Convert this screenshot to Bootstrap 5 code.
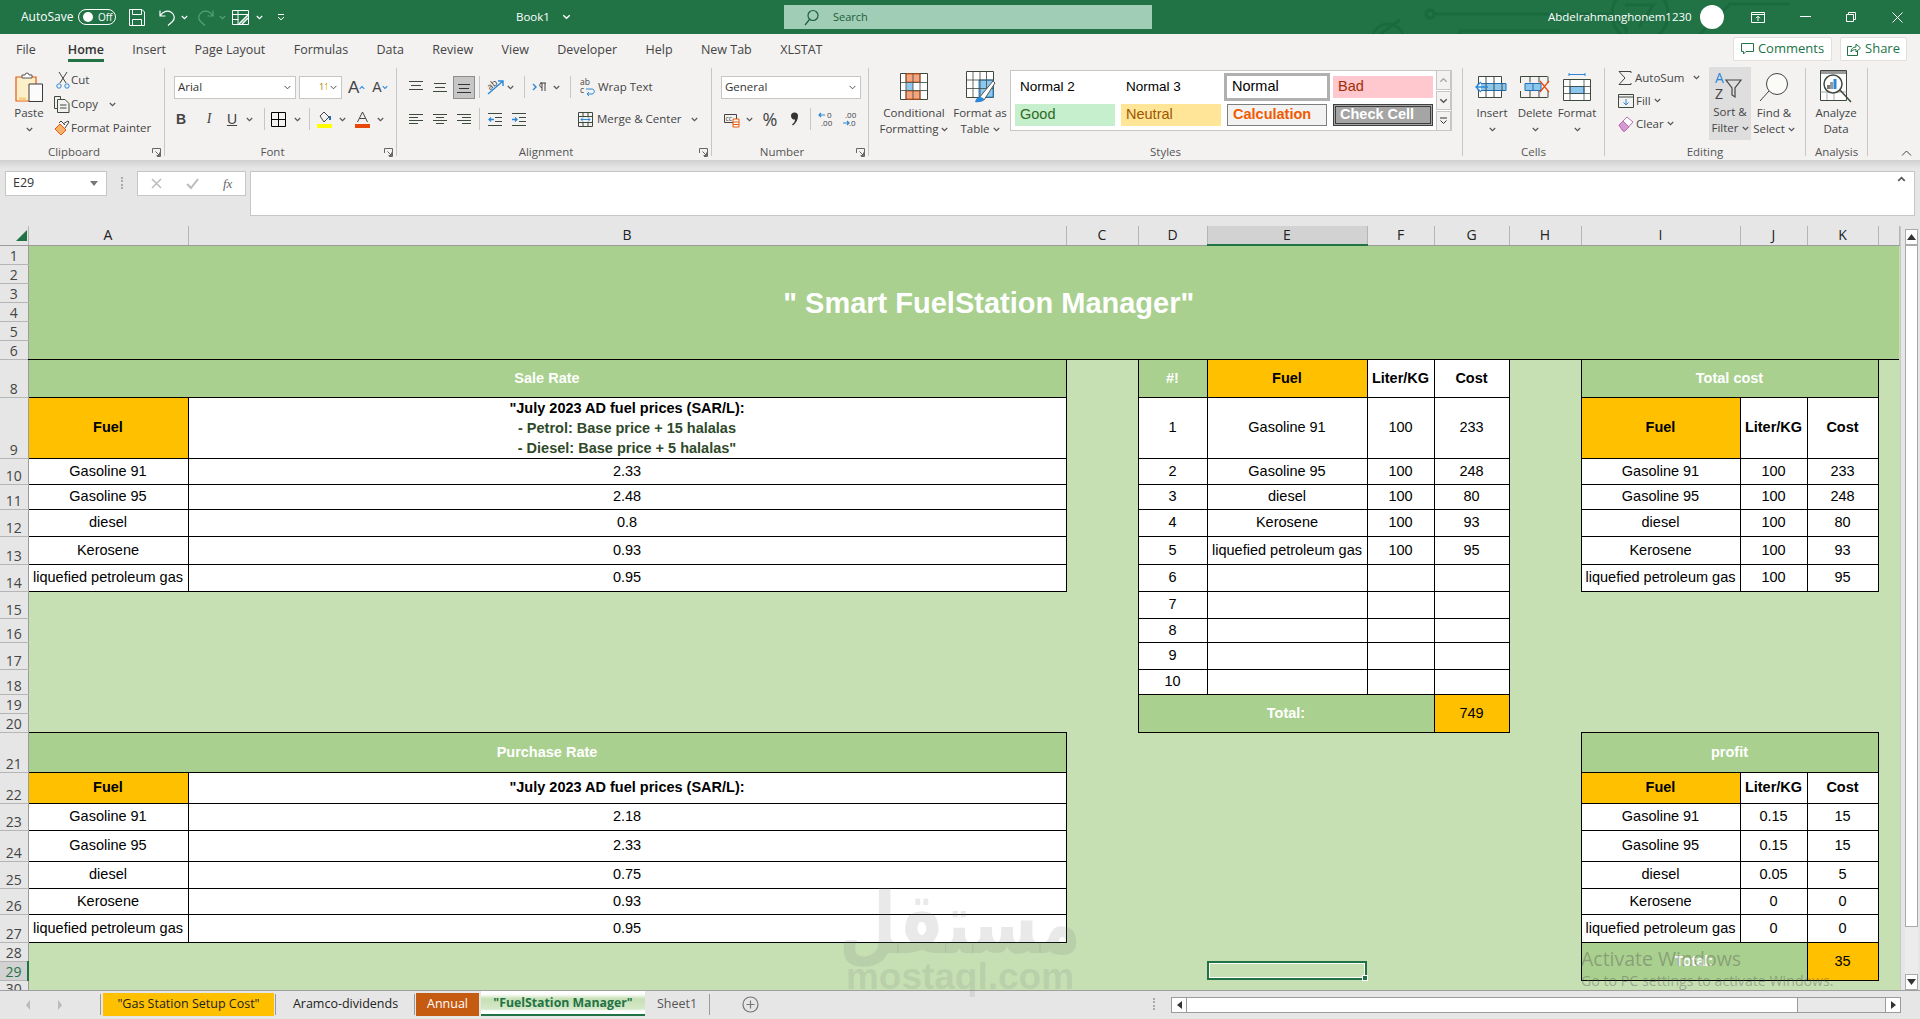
<!DOCTYPE html>
<html lang="en">
<head>
<meta charset="utf-8">
<title>Book1 - Excel</title>
<link href="https://cdn.jsdelivr.net/npm/bootstrap@5.3.0/dist/css/bootstrap.min.css" rel="stylesheet">
<style>
html,body{height:1019px;overflow:hidden;background:#e6e6e6}
body{font-family:"Open Sans","Noto Sans",sans-serif;font-size:11.5px;color:#444;position:relative;width:1920px}
svg{flex:none;display:block;overflow:visible}
.ml1{margin-left:1px}.ml2{margin-left:2px}.ml3{margin-left:3px}.ml4{margin-left:4px}.ml5{margin-left:5px}.ml6{margin-left:6px}.ml7{margin-left:7px}.ml8{margin-left:8px}.ml9{margin-left:9px}.ml10{margin-left:10px}.ml11{margin-left:11px}.ml12{margin-left:12px}.ml13{margin-left:13px}.ml14{margin-left:14px}.ml16{margin-left:16px}.ml20{margin-left:20px}.ml27{margin-left:27px}.ml35{margin-left:35px}.ml36{margin-left:36px}.ml52{margin-left:52px}
/* title bar */
.xl-title{height:34px;background:#217346;color:#fff;position:relative;overflow:hidden}
.xl-title>*{position:relative}
.xl-title .xl-circuit{position:absolute;left:1280px;top:0}
.xl-auto{margin-left:21px;font-size:12px;width:50px;white-space:nowrap}
.xl-toggle{margin-left:7px;width:38px;height:16px;border:1px solid #fff;border-radius:8px;font-size:10px;padding-left:19px;line-height:14px;flex:none}
.xl-toggle::before{content:"";position:absolute;width:10px;height:10px;border-radius:50%;background:#fff;margin:2px 0 0 -15px}
.xl-book{margin-left:231px;width:43px;font-size:11.5px}
.xl-search{margin-left:213px;width:368px;height:24px;background:#a0cdb5;color:#1d5d3b;padding-left:20px;font-size:11px;flex:none}
.xl-user{margin-left:396px;width:140px;font-size:11.5px;white-space:nowrap;flex:none}
.xl-avatar{width:24px;height:24px;border-radius:50%;background:#fff;margin-left:12px;flex:none}
/* ribbon */
.xl-ribbon{height:126px;background:#f3f2f1}
.xl-tabs{height:32px;position:relative}
.xl-tabs .nav-link{padding:0;margin-right:28.4px;color:#444;font-size:12.5px;line-height:31px;height:28px;border-bottom:3px solid transparent;white-space:nowrap}
.xl-tabs .nav-item:first-child .nav-link{margin-right:32px}
.xl-tabs .nav-link.active{color:#333;font-weight:600;border-bottom-color:#217346}
.xl-comment{margin-top:3px;height:24px;background:#fff;border:1px solid #e1dfdd;border-radius:2px;color:#217346;font-size:13px;padding:0;font-weight:500}
.xl-c1{width:99px;margin-left:auto}.xl-c2{width:67px;margin-left:8px;margin-right:13px}
.xl-groups{height:94px}
.xl-grp{height:88px;margin-top:2px;border-right:1px solid #c8c6c4;flex:none;position:relative}
.xl-lab{position:absolute;left:0;right:0;top:76px;height:16px;line-height:16px;text-align:center;color:#555;font-size:11.5px}
.xl-lab.lch{right:16px}
.xl-launch{position:absolute;right:3px;top:80px}
.g1{width:165px}.g2{width:232px}.g3{width:315px}.g4{width:157px}.g5{width:594px}.g6{width:142px}.g7{width:201px}.g8{width:62px}
.xl-rows{padding-top:8px}
.xl-r{height:22px;display:flex;align-items:center;white-space:nowrap}
.xl-r+.xl-r{margin-top:10px}
.xl-sep{width:1px;height:22px;background:#c8c6c4;flex:none}
.xl-sel{height:23px;border:1px solid #c8c6c4;border-radius:0;padding:0 14px 0 3px;font-size:11.5px;line-height:20px;background-size:9px 7px;background-position:right 3px center;color:#333;min-height:0;flex:none;font-family:"Open Sans",sans-serif}
.xl-sel:focus{box-shadow:none}
.xf{width:122px}.xs{width:43px;padding-left:19px;font-size:9px;color:#a08000}.xn{width:140px}
.xl-b{font:bold 14px "Liberation Sans",sans-serif;width:12px;text-align:center;color:#444}
.xl-i{font:italic 14px "Liberation Serif",serif;width:12px;text-align:center;color:#444}
.xl-u{font:14px "Liberation Sans",sans-serif;width:12px;text-align:center;text-decoration:underline;color:#444}
.xl-ga{font:17px "Liberation Sans",sans-serif;color:#444;line-height:1}
.xl-gb{font:14px "Liberation Sans",sans-serif;color:#444;line-height:1}
.xl-pct{font:18px "Open Sans",sans-serif;color:#444;width:16px;text-align:center;line-height:1}
.xl-box{width:22px;height:23px;background:#c6c6c6;border:1px solid #8e8e8e;display:flex;align-items:center;justify-content:center;flex:none}
.xl-big{display:flex;flex-direction:column;align-items:center;flex:none;text-align:center;line-height:16px;white-space:nowrap}
.xl-big .xl-ic{height:37px;display:flex;align-items:center;justify-content:center}
.xl-big svg.cv{display:inline-block;vertical-align:1px}
.xl-big .xl-cv{display:flex;justify-content:center;height:16px;align-items:center}
.bw42{width:42px}.bw74{width:74px}.bw58{width:58px}.bw52{width:52px}
.xl-hot{background:#dedede;height:73px;margin-top:-1px;align-self:flex-start}
.xl-sm{height:24px;display:flex;align-items:center;white-space:nowrap}
.xl-e{height:23px;display:flex;align-items:center;white-space:nowrap}
.xl-edcol{width:91px;flex:none;margin-top:-2px}
.xl-gal{width:442px;height:61px;margin:2px 0 0 1px;background:#fff;border:1px solid #c8c6c4;flex:none;position:relative}
.xl-galgrid{display:grid;grid-template-columns:repeat(4,100px);grid-auto-rows:22px;gap:6px;padding:5px 0 0 4px;font:14.5px/20px "Liberation Sans",sans-serif;color:#000}
.xl-galgrid>div{padding-left:5px;white-space:nowrap;overflow:visible}
.st-n{font-size:13.5px;padding-left:6px;line-height:22px}
.st-normal{background:#fff;outline:3px solid #b0b0b0;padding-left:3px}
.st-bad{background:#ffc7ce;color:#9c3006}
.st-good{background:#c6efce;color:#2f6a1f}
.st-neu{background:#ffe598;color:#9c5700}
.st-calc{background:#f2f2f2;color:#f15a00;font-weight:700;border:1px solid #7f7f7f;line-height:18px}
.st-chk{background:#a5a5a5;color:#fff;font-weight:700;border:3px double #3f3f3f;line-height:15px;padding-left:4px!important}
.xl-galbtn{position:absolute;right:0;top:-1px;bottom:-1px;width:15px;display:flex;flex-direction:column;gap:1px}
.xl-galbtn div{flex:1;border:1px solid #c8c6c4;background:#f3f2f1;display:flex;align-items:center;justify-content:center}
.xl-collapse{margin:84px 0 0 33px;align-self:flex-start}
/* formula bar */
.xl-fbar{height:66px;padding-top:11px;background:linear-gradient(#cfcfcf,#e6e6e6 8px)}
.xl-name{margin-left:5px;width:102px;height:25px;background:#fff;border:1px solid #c8c6c4;padding-left:7px;padding-right:7px;color:#333;font-size:12.5px}
.xl-dots{width:2px;height:12px;margin:6px 0 0 14px;border-left:2px dotted #aaa}
.xl-fx{margin-left:14px;width:109px;height:25px;background:#fff;border:1px solid #c8c6c4;padding-left:13px;gap:24px}
.xl-fxt{font:italic 13px "Liberation Serif",serif;color:#666}
.xl-input{margin-left:4px;width:1665px;height:45px;border:1px solid #c8c6c4;background:#fff;padding:4px 8px;display:flex;justify-content:flex-end}
/* sheet */
.xl-sheet{height:764px;overflow:hidden}
.xl-grid{table-layout:fixed;width:1899px;border-collapse:collapse;font:14.5px/1.15 "Liberation Sans",sans-serif;color:#000;flex:none;background:#c6e0b4}
.c0{width:28px}.ca{width:160px}.cb{width:878px}.cc{width:72px}.cdd{width:69px}.ce{width:160px}.cf{width:67px}.cgg{width:75px}.ch{width:72px}.ci{width:159px}.cj{width:67px}.ck{width:71px}.cl{width:21px}
.xl-grid td{padding:0;text-align:center;vertical-align:middle;background:#c6e0b4;overflow:hidden;white-space:nowrap}
.xl-grid thead th{height:19px;background:#e6e6e6;font:400 14px/18px "Open Sans",sans-serif;color:#222;text-align:center;border-right:1px solid #b5b5b5;border-bottom:1px solid #9b9b9b;padding:0}
.xl-grid thead th.xl-hc{background:#d2d2d2;border-bottom:2px solid #217346}
.xl-grid tbody th{background:#e6e6e6;font:400 14px/16px "Open Sans",sans-serif;color:#444;text-align:center;vertical-align:bottom;padding:0;border-bottom:1px solid #b5b5b5;border-right:1px solid #9b9b9b}
.xl-grid tbody th.xl-hr{background:#d2d2d2;border-right:2px solid #217346;color:#217346}
.xl-grid tbody th div{height:10px;overflow:hidden}
.rh19{height:19px}.rh24{height:24px}.rh25{height:25px}.rh26{height:26px}.rh27{height:27px}.rh28{height:28px}.rh31{height:31px}.rh38{height:38px}.rh40{height:40px}.rh60{height:60px}.rh11{height:11px}
.xl-grid td.cap{background:#a9d08e;color:#fff;font-weight:700;font-size:29px;border-bottom:1px solid #000;padding-left:50px;padding-top:2px}
.xl-grid td.cw{background:#fff;border:1px solid #000}
.xl-grid td.cwb{background:#fff;border:1px solid #000;font-weight:700}
.xl-grid td.cg{background:#ffc000;border:1px solid #000;font-weight:700}
.xl-grid td.cgn{background:#ffc000;border:1px solid #000}
.xl-grid td.cd{background:#a9d08e;border:1px solid #000;color:#fff;font-weight:700}
.xl-multi{line-height:20px}
.xl-olive{color:#2f4a2a}
.xl-grid td.xl-cell{position:relative;box-shadow:inset 0 0 0 2px #217346,inset 0 0 0 3px #fff;overflow:visible}
.xl-handle{position:absolute;right:-1px;bottom:-1px;width:6px;height:6px;background:#217346;border:1px solid #fff;z-index:2}
.xl-vs{width:21px;background:#e6e6e6;padding:3px 3px 0 4px;flex:none;display:flex;flex-direction:column;border-left:1px solid #c8c8c8}
.xl-vs .xl-up{height:16px;background:#fff;border:1px solid #aaa;display:flex;align-items:center;justify-content:center;flex:none}
.xl-vs .xl-th{height:682px;background:#fff;border:1px solid #aaa;flex:none}
.xl-vs .xl-tr{flex:1;background:#ececec}
/* sheet tabs */
.xl-bar{height:29px;background:#e6e6e6;border-top:1px solid #a0a0a0;position:relative}
.xl-arrows{margin:8px 0 0 26px}
.xl-tab{height:23px;margin-top:2px;display:flex;align-items:center;justify-content:center;font-size:12.5px;color:#222;flex:none;white-space:nowrap}
.t1{width:171px;background:#ffc000;margin-left:2px}
.t2{width:137px;margin-left:1px}
.t3{width:63px;background:#c55a11;color:#fff;margin-left:1px}
.t4{width:164px;margin-left:2px;background:linear-gradient(#fff 3px,#c6e0b4 8px,#d5e8c9 18px,#fff 20px);border-bottom:2px solid #217346;color:#217346;font-weight:700;font-size:12.3px;height:25px;margin-top:0;padding-top:2px}
.t5{width:64px;color:#555}
.tsep{width:1px;height:21px;background:#9b9b9b;margin-top:3px;flex:none}
.ts0{margin-left:38px}
.xl-plus{margin-left:32px;margin-top:5px}
.xl-hdots{margin:7px 0 0 394px;width:2px;height:12px;border-left:2px dotted #aaa}
.xl-hs{margin:6px 0 0 16px;width:730px;height:16px;display:flex;background:#e9e9e9;border:1px solid #9b9b9b;flex:none}
.xl-hs .ab{width:15px;background:#fff;display:flex;align-items:center;justify-content:center;flex:none}
.xl-hs .hb1{border-right:1px solid #9b9b9b}.xl-hs .hb2{border-left:1px solid #9b9b9b;margin-left:auto}
.xl-hs .ht{width:611px;background:#fff;border-right:1px solid #9b9b9b;flex:none}
/* overlays */
.xl-wm{position:absolute;text-align:center;color:rgba(125,125,125,.17);pointer-events:none;white-space:nowrap}
.wm1{left:790px;width:340px;top:878px;font:bold 86px/90px "DejaVu Sans",sans-serif;transform:scaleX(.77)}
.wm2{left:845px;width:230px;top:957px;font:bold 37px/40px "Liberation Sans",sans-serif}
.xl-act{position:absolute;left:1581px;color:rgba(90,90,90,.42);white-space:nowrap;pointer-events:none;font-family:"Open Sans",sans-serif}
.ac1{top:945px;font-size:19.5px;line-height:28px}
.ac2{top:971px;font-size:14.2px;line-height:20px}
</style>
</head>
<body>
<svg width="0" height="0" class="d-none">
<symbol id="cv" viewBox="0 0 7 5"><path d="M.8 1l2.700 2.600L6.200 1" fill="none" stroke="#555" stroke-width="1.200"/></symbol>
<symbol id="cw" viewBox="0 0 7 5"><path d="M.8 1l2.700 2.600L6.200 1" fill="none" stroke="#fff" stroke-width="1.200"/></symbol>
<symbol id="dl" viewBox="0 0 9 9"><path d="M.5 5V.5H8.500V8.500H5M3.500 3.500l4 4M7.500 4.500v3h-3" fill="none" stroke="#666"/></symbol>
</svg>

<!-- TITLE BAR -->
<header class="xl-title d-flex align-items-center">
  <svg class="xl-circuit" width="520" height="34" viewBox="0 0 520 34" fill="none" stroke="#1a6a3d" stroke-width="3"><circle cx="150" cy="14" r="4"/><path d="M154 14H330l16 14v6M100 34l20-14M180 34l0-3h100"/><circle cx="108" cy="40" r="16"/><circle cx="360" cy="14" r="28"/><path d="M345 5h28l-14 22"/><path d="M420 34L450 4h60"/></svg>
  <div class="xl-auto">AutoSave</div>
  <div class="xl-toggle">Off</div>
  <svg class="ml13" width="16" height="17" viewBox="0 0 16 17" fill="none" stroke="#fff"><path d="M.5.500h12.500l2.500 2.500v13.500H.5z"/><path d="M3.500.5v5h9v-5M3.500 16.500v-6h9v6"/></svg>
  <svg class="ml14" width="16" height="17" viewBox="0 0 16 17" fill="none" stroke="#fff" stroke-width="1.200"><path d="M1 1.500v5.500h5.500M1 7C4 2 9 1 12.500 3.500S16 10 13.500 12.500L9 16.500"/></svg>
  <svg class="ml6" width="7" height="5"><use href="#cw"/></svg>
  <svg class="ml10" width="16" height="17" viewBox="0 0 16 17" fill="none" stroke="#54a07a" stroke-width="1.200"><path d="M15 1.500v5.500H9.500M15 7C12 2 7 1 3.500 3.500S0 10 2.500 12.500L7 16.500"/></svg>
  <svg class="ml5" width="7" height="5" viewBox="0 0 7 5"><path d="M.8 1l2.700 2.600L6.200 1" fill="none" stroke="#54a07a" stroke-width="1.200"/></svg>
  <svg class="ml6" width="17" height="15" viewBox="0 0 17 15" fill="none" stroke="#fff"><path d="M.5.500h16v14H.5zM.5 4.500h16M6 .5v14M.5 9.500h6"/><path d="M7 14l9-9M10 14l6-6" stroke-width="1.500"/></svg>
  <svg class="ml7" width="7" height="5"><use href="#cw"/></svg>
  <svg class="ml14" width="8" height="8" viewBox="0 0 8 8" fill="none" stroke="#fff"><path d="M1 1.500h6M1 4l3 2.800L7 4"/></svg>
  <div class="xl-book d-flex align-items-center">Book1</div>
  <svg class="ml3" width="9" height="6"><use href="#cw"/></svg>
  <div class="xl-search d-flex align-items-center"><svg width="15" height="17" viewBox="0 0 15 17" fill="none" stroke="#1d5d3b" stroke-width="1.200"><circle cx="9" cy="6.500" r="5"/><path d="M5.500 10.500L1 16"/></svg><span class="ml14">Search</span></div>
  <div class="xl-user">Abdelrahmanghonem1230</div>
  <div class="xl-avatar"></div>
  <svg class="ml27" width="14" height="11" viewBox="0 0 14 11" fill="none" stroke="#fff"><path d="M.5.500h13v10H.5zM.5 2.500h13M7 9V4.500M5 6.200l2-2 2 2"/></svg>
  <svg class="ml35" width="11" height="2"><path d="M0 .5h11" stroke="#fff"/></svg>
  <svg class="ml35" width="10" height="10" viewBox="0 0 10 10" fill="none" stroke="#fff"><path d="M.5 2.500h7v7h-7zM2.500 2.500V.5h7v7h-2"/></svg>
  <svg class="ml36" width="11" height="11" viewBox="0 0 11 11" stroke="#fff"><path d="M.5.500l10 10M10.500.5l-10 10"/></svg>
</header>

<!-- RIBBON -->
<section class="xl-ribbon">
  <div class="xl-tabs d-flex">
    <ul class="nav flex-nowrap ms-3">
      <li class="nav-item"><a class="nav-link" href="#">File</a></li>
      <li class="nav-item"><a class="nav-link active" href="#">Home</a></li>
      <li class="nav-item"><a class="nav-link" href="#">Insert</a></li>
      <li class="nav-item"><a class="nav-link" href="#">Page Layout</a></li>
      <li class="nav-item"><a class="nav-link" href="#">Formulas</a></li>
      <li class="nav-item"><a class="nav-link" href="#">Data</a></li>
      <li class="nav-item"><a class="nav-link" href="#">Review</a></li>
      <li class="nav-item"><a class="nav-link" href="#">View</a></li>
      <li class="nav-item"><a class="nav-link" href="#">Developer</a></li>
      <li class="nav-item"><a class="nav-link" href="#">Help</a></li>
      <li class="nav-item"><a class="nav-link" href="#">New Tab</a></li>
      <li class="nav-item"><a class="nav-link" href="#">XLSTAT</a></li>
    </ul>
    <button class="btn xl-comment xl-c1 d-flex align-items-center justify-content-center gap-1"><svg width="13" height="12" viewBox="0 0 13 12" fill="none" stroke="#217346"><path d="M.5.500h12v8H5l-2.500 2.500V8.500h-2z"/></svg>Comments</button>
    <button class="btn xl-comment xl-c2 d-flex align-items-center justify-content-center gap-1"><svg width="14" height="13" viewBox="0 0 14 13" fill="none" stroke="#217346"><path d="M5 3.500H.5v9h10V8M4 9c0-3 2-5 5-5V1l4.500 4L9 9V6.500C7 6.500 5 7 4 9z"/></svg>Share</button>
  </div>
  <div class="xl-groups d-flex">
    <!-- Clipboard -->
    <div class="xl-grp g1 d-flex">
      <div class="xl-big ms-2 bw42">
        <div class="xl-ic"><svg width="28" height="30" viewBox="0 0 28 30"><path d="M1 5h20v24H1z" fill="#fdf0c8" stroke="#e8590c" stroke-width="1.200"/><path d="M4 27h7" stroke="#f6cf80" stroke-width="3"/><path d="M7 6V3h3a2 2 0 0 1 4 0h3v3z" fill="#fff" stroke="#555"/><path d="M14 12h13.500v17.500H14z" fill="#fbfbfb" stroke="#3b3b3b"/></svg></div>
        <div>Paste</div>
        <div class="xl-cv"><svg width="7" height="5"><use href="#cv"/></svg></div>
      </div>
      <div class="ml4">
        <div class="xl-sm"><svg class="ml2" width="14" height="18" viewBox="0 0 14 18" fill="none"><path d="M3 1l7 11M11 1L4 12" stroke="#444"/><circle cx="3" cy="15" r="2.200" stroke="#2b88d8"/><circle cx="11" cy="15" r="2.200" stroke="#2b88d8"/></svg><span class="ml1">Cut</span></div>
        <div class="xl-sm"><svg width="16" height="17" viewBox="0 0 16 17" fill="none" stroke="#3e4a3e"><path d="M6.500 3.500V.5H.5v12h3"/><path d="M3.500 3.500H11l4 4v9H3.500zM6 9h6.500M6 12h6.500"/></svg><span class="ml1">Copy</span><svg class="ml11" width="7" height="5"><use href="#cv"/></svg></div>
        <div class="xl-sm"><svg width="16" height="16" viewBox="0 0 16 16" fill="none"><path d="M1 9l5-5 6 6-5 5z" fill="#f6b26b" stroke="#e8590c"/><path d="M5 3l2-2 4 4M9 4l5-3 1 1-4 6" stroke="#444" fill="#fff"/></svg><span class="ml1">Format Painter</span></div>
      </div>
      <div class="xl-lab lch">Clipboard</div><svg class="xl-launch" width="9" height="9"><use href="#dl"/></svg>
    </div>
    <!-- Font -->
    <div class="xl-grp g2 xl-rows">
      <div class="xl-r">
        <select class="form-select xl-sel xf ml9"><option>Arial</option></select>
        <select class="form-select xl-sel xs ml3"><option>11</option></select>
        <span class="xl-ga ml6">A</span><svg width="6" height="5" viewBox="0 0 7 5"><path d="M.8 4l2.700-2.600L6.200 4" fill="none" stroke="#2b88d8" stroke-width="1.200"/></svg>
        <span class="xl-gb ml7">A</span><svg width="6" height="5"  viewBox="0 0 7 5"><path d="M.8 1l2.700 2.600L6.200 1" fill="none" stroke="#2b88d8" stroke-width="1.200"/></svg>
      </div>
      <div class="xl-r">
        <span class="xl-b ml10">B</span><span class="xl-i ml16">I</span><span class="xl-u ml11">U</span>
        <svg class="ml8" width="7" height="5"><use href="#cv"/></svg>
        <div class="xl-sep ml11"></div>
        <svg class="ml6" width="15" height="15" viewBox="0 0 15 15" fill="none" stroke="#000"><path d="M.5.500h14v14H.5zM7.500.5v14M.5 7.500h14"/></svg>
        <svg class="ml8" width="7" height="5"><use href="#cv"/></svg>
        <div class="xl-sep ml8"></div>
        <svg class="ml7" width="16" height="17" viewBox="0 0 16 17" fill="none"><path d="M3 5l4-4 5 5-5 5z" stroke="#444"/><path d="M13 5v4" stroke="#1f6fb5" stroke-width="2"/><path d="M0 15h15" stroke="#ffff00" stroke-width="4"/></svg>
        <svg class="ml6" width="7" height="5"><use href="#cv"/></svg>
        <svg class="ml9" width="15" height="17" viewBox="0 0 15 17" fill="none"><path d="M2.500 11L7.500 1l5 10M4.500 7.500h6" stroke="#444"/><path d="M0 15h15" stroke="#e8480c" stroke-width="4"/></svg>
        <svg class="ml7" width="7" height="5"><use href="#cv"/></svg>
      </div>
      <div class="xl-lab lch">Font</div><svg class="xl-launch" width="9" height="9"><use href="#dl"/></svg>
    </div>
    <!-- Alignment -->
    <div class="xl-grp g3 xl-rows">
      <div class="xl-r">
        <svg class="ml12" width="14" height="12" viewBox="0 0 14 12" fill="none" stroke="#3e4a3e"><path d="M0 .5h14M2 4.500h10M0 8.500h14"/></svg>
        <svg class="ml10" width="14" height="12" viewBox="0 0 14 12" fill="none" stroke="#3e4a3e"><path d="M1 2.500h12M2 6.500h10M0 10.500h14"/></svg>
        <div class="xl-box ml6"><svg width="14" height="12" viewBox="0 0 14 12" fill="none" stroke="#333"><path d="M1 3.500h12M2 7.500h10M0 11.500h14"/></svg></div>
        <div class="xl-sep ml4"></div>
        <svg class="ml7" width="18" height="17" viewBox="0 0 18 17" fill="none"><path d="M1 15L16 2M11 2h5v5" stroke="#2b88d8" stroke-width="1.400"/><text x="0" y="9" font-size="9" fill="#444" transform="rotate(-40 5 6)" font-family="Open Sans">ab</text></svg>
        <svg class="ml2" width="7" height="5"><use href="#cv"/></svg>
        <div class="xl-sep ml10"></div>
        <svg class="ml8" width="14" height="12" viewBox="0 0 14 12" fill="none"><path d="M0 3l3 3-3 3" stroke="#2b88d8" stroke-width="1.400"/><path d="M7 2h6M9 2v8M12 2v8M9 2C6 2 6 6.500 9 6.500" stroke="#444"/></svg>
        <svg class="ml6" width="7" height="5"><use href="#cv"/></svg>
        <div class="xl-sep ml10"></div>
        <svg class="ml9" width="15" height="18" viewBox="0 0 15 18" fill="none"><text x="0" y="7" font-size="8.500" fill="#444" font-family="Open Sans">ab</text><text x="0" y="15" font-size="8.500" fill="#444" font-family="Open Sans">c</text><path d="M6 11h6c3 0 3 5 0 5H7M9 14l-2 2 2 2" stroke="#2b88d8"/></svg>
        <span class="ml3">Wrap Text</span>
      </div>
      <div class="xl-r">
        <svg class="ml12" width="14" height="12" viewBox="0 0 14 12" fill="none" stroke="#3e4a3e"><path d="M0 1.500h14M0 4.500h9M0 7.500h14M0 10.500h9"/></svg>
        <svg class="ml10" width="14" height="12" viewBox="0 0 14 12" fill="none" stroke="#3e4a3e"><path d="M0 1.500h14M3 4.500h8M0 7.500h14M3 10.500h8"/></svg>
        <svg class="ml10" width="14" height="12" viewBox="0 0 14 12" fill="none" stroke="#3e4a3e"><path d="M0 1.500h14M5 4.500h9M0 7.500h14M5 10.500h9"/></svg>
        <div class="xl-sep ml8"></div>
        <svg class="ml8" width="14" height="13" viewBox="0 0 14 13" fill="none"><path d="M0 .5h14M7 4.500h7M7 8.500h7M0 12.500h14" stroke="#3e4a3e"/><path d="M6 6.500H1M3 4.500l-2 2 2 2" stroke="#2b88d8" stroke-width="1.300"/></svg>
        <svg class="ml10" width="14" height="13" viewBox="0 0 14 13" fill="none"><path d="M0 .5h14M7 4.500h7M7 8.500h7M0 12.500h14" stroke="#3e4a3e"/><path d="M0 6.500h5M3 4.500l2 2-2 2" stroke="#2b88d8" stroke-width="1.300"/></svg>
        <svg class="ml52" width="15" height="15" viewBox="0 0 15 15" fill="none"><path d="M.5.500h14v14H.5zM.5 4.500h14M.5 10.500h14M5 .5v4M10 .5v4M5 10.500v4M10 10.500v4" stroke="#3e4a3e"/><path d="M3 7.500h9M5 5.500l-2 2 2 2M10 5.500l2 2-2 2" stroke="#2b88d8"/></svg>
        <span class="ml4">Merge &amp; Center</span>
        <svg class="ml9" width="7" height="5"><use href="#cv"/></svg>
      </div>
      <div class="xl-lab lch">Alignment</div><svg class="xl-launch" width="9" height="9"><use href="#dl"/></svg>
    </div>
    <!-- Number -->
    <div class="xl-grp g4 xl-rows">
      <div class="xl-r"><select class="form-select xl-sel xn ml9"><option>General</option></select></div>
      <div class="xl-r">
        <svg class="ml12" width="16" height="17" viewBox="0 0 16 17" fill="none"><path d="M.5 3.500h12v8H.5z" stroke="#444"/><text x="1.500" y="10" font-size="7" fill="#444" font-family="Open Sans">cc</text><path d="M9 8h6v8H9z" fill="#fff" stroke="#e8590c"/><path d="M9 11h6M9 13.500h6" stroke="#e8590c"/></svg>
        <svg class="ml6" width="7" height="5"><use href="#cv"/></svg>
        <span class="xl-pct ml9">%</span>
        <svg class="ml12" width="9" height="14" viewBox="0 0 9 14"><path d="M1 4a3.500 3.500 0 1 1 7 0c0 4-2 7-5 9.500L2 12.500C4 11 5 9.500 5 7.500A3.500 3.500 0 0 1 1 4z" fill="#333"/></svg>
        <div class="xl-sep ml11"></div>
        <svg class="ml7" width="16" height="16" viewBox="0 0 16 16" fill="none"><path d="M7 4H1M3 2L1 4l2 2" stroke="#2b88d8" stroke-width="1.200"/><text x="9" y="7" font-size="8" fill="#444" font-family="Open Sans">0</text><text x="3" y="15" font-size="8" fill="#444" font-family="Open Sans">.00</text></svg>
        <svg class="ml8" width="16" height="16" viewBox="0 0 16 16" fill="none"><text x="3" y="7" font-size="8" fill="#444" font-family="Open Sans">.00</text><path d="M1 12h6M5 10l2 2-2 2" stroke="#2b88d8" stroke-width="1.200"/><text x="7" y="15" font-size="8" fill="#444" font-family="Open Sans">.0</text></svg>
      </div>
      <div class="xl-lab lch">Number</div><svg class="xl-launch" width="9" height="9"><use href="#dl"/></svg>
    </div>
    <!-- Styles -->
    <div class="xl-grp g5 d-flex">
      <div class="xl-big bw74 ml8">
        <div class="xl-ic"><svg width="28" height="27" viewBox="0 0 28 27"><path d="M.5.500h27v26H.5z" fill="#fff" stroke="#3e4a3e"/><path d="M6 1h14v8H6zM6 18h14v8H6z" fill="#f4a582" stroke="#e8590c"/><path d="M6 9.500h7v8H6z" fill="#91c9ee"/><path d="M.5 9.500h27M.5 17.500h27M6 .5v26M13 .5v26M20 .5v26" stroke="#3e4a3e" fill="none" stroke-opacity=".8"/></svg></div>
        <div>Conditional</div>
        <div>Formatting <svg class="cv" width="7" height="5"><use href="#cv"/></svg></div>
      </div>
      <div class="xl-big bw58">
        <div class="xl-ic"><svg width="29" height="32" viewBox="0 0 29 32"><path d="M.5.500h27v26H.5z" fill="#fff" stroke="#3e4a3e"/><path d="M13 9h14v17H13z" fill="#8ec7ee" stroke="#2b88d8"/><path d="M.5 9h27M.5 17.500h27M7 .5v26M14 .5v26M20.500.5v26" stroke="#3e4a3e" fill="none" stroke-opacity=".8"/><path d="M13 27L27 10l2 2-11 17z" fill="#fff" stroke="#555"/><path d="M9 31c1-5 5-6 8-4s-1 5-8 4z" fill="#2b88d8"/></svg></div>
        <div>Format as</div>
        <div>Table <svg class="cv" width="7" height="5"><use href="#cv"/></svg></div>
      </div>
      <div class="xl-gal">
        <div class="xl-galgrid">
          <div class="st-n">Normal 2</div><div class="st-n">Normal 3</div><div class="st-normal">Normal</div><div class="st-bad">Bad</div>
          <div class="st-good">Good</div><div class="st-neu">Neutral</div><div class="st-calc">Calculation</div><div class="st-chk">Check Cell</div>
        </div>
        <div class="xl-galbtn">
          <div><svg width="9" height="6" viewBox="0 0 7 5"><path d="M.8 4l2.700-2.600L6.200 4" fill="none" stroke="#aaa" stroke-width="1.200"/></svg></div>
          <div><svg width="9" height="6"><use href="#cv"/></svg></div>
          <div><svg width="9" height="8" viewBox="0 0 9 8" fill="none" stroke="#333"><path d="M1 1h7M1.500 3.500l3 3 3-3"/></svg></div>
        </div>
      </div>
      <div class="xl-lab">Styles</div>
    </div>
    <!-- Cells -->
    <div class="xl-grp g6 d-flex ps-2">
      <div class="xl-big bw42">
        <div class="xl-ic"><svg width="34" height="22" viewBox="0 0 34 22" fill="none"><path d="M3.500.5h23v21h-23z" fill="#fff" stroke="#3e4a3e"/><path d="M3 7.500h28v7H3z" fill="#8ec7ee" stroke="#1f6fb5"/><path d="M11 .5v21M19 .5v21M27 7v8" stroke="#3e4a3e"/><path d="M13 11H2M6 6l-5 5 5 5" stroke="#2b88d8" stroke-width="1.400" fill="#fff"/></svg></div>
        <div>Insert</div>
        <div class="xl-cv"><svg width="7" height="5"><use href="#cv"/></svg></div>
      </div>
      <div class="xl-big bw42 ml1">
        <div class="xl-ic"><svg width="30" height="22" viewBox="0 0 30 22" fill="none"><path d="M.5.500h27M.5 21.500h27M.5.5V7M.5 15v6.500M28 .5V7M28 15v6.500M10 .5v6M19 .5v6M10 15v6M19 15v6" stroke="#3e4a3e"/><path d="M5 7.500h16v7H5z" fill="#8ec7ee" stroke="#1f6fb5"/><path d="M13 7.500v7" stroke="#1f6fb5"/><path d="M20 5l9 11M29 5l-9 11" stroke="#e8480c" stroke-width="1.200"/></svg></div>
        <div>Delete</div>
        <div class="xl-cv"><svg width="7" height="5"><use href="#cv"/></svg></div>
      </div>
      <div class="xl-big bw42">
        <div class="xl-ic"><svg width="28" height="28" viewBox="0 0 28 28" fill="none"><path d="M6 1.500h16M6 0v3M22 0v3" stroke="#2b88d8"/><path d="M.5 6.500h27v21H.5z" fill="#fff" stroke="#3e4a3e"/><path d="M7 13.500h14v7H7z" fill="#8ec7ee" stroke="#1f6fb5"/><path d="M.5 13.500h27M.5 20.500h27M7 6.500v21M21 6.500v21" stroke="#3e4a3e" stroke-opacity=".8"/></svg></div>
        <div>Format</div>
        <div class="xl-cv"><svg width="7" height="5"><use href="#cv"/></svg></div>
      </div>
      <div class="xl-lab">Cells</div>
    </div>
    <!-- Editing -->
    <div class="xl-grp g7 d-flex">
      <div class="ml13 xl-edcol">
        <div class="xl-e"><svg width="14" height="14" viewBox="0 0 14 14" fill="none" stroke="#444"><path d="M13 2V.5H1L7 7l-6 6.500h12V12"/></svg><span class="ml3">AutoSum</span><svg class="ml9" width="7" height="5"><use href="#cv"/></svg></div>
        <div class="xl-e"><svg width="16" height="14" viewBox="0 0 16 14" fill="none"><path d="M.5.500h15v13H.5zM.5 3h15" stroke="#3e4a3e"/><path d="M8 5v6M5.500 8.500L8 11l2.500-2.500" stroke="#2b88d8"/></svg><span class="ml2">Fill</span><svg class="ml3" width="7" height="5"><use href="#cv"/></svg></div>
        <div class="xl-e"><svg width="16" height="16" viewBox="0 0 16 16" fill="none"><path d="M1 9l8-8 6 5-8 9H5z" fill="#fff" stroke="#b96fb5"/><path d="M1 9l4-4 6 6-4 4H5z" fill="#d59ad2" stroke="#b96fb5"/></svg><span class="ml2">Clear</span><svg class="ml3" width="7" height="5"><use href="#cv"/></svg></div>
      </div>
      <div class="xl-big bw42 xl-hot">
        <div class="xl-ic"><svg width="30" height="30" viewBox="0 0 30 30" fill="none"><text x="0" y="12" font-size="14" fill="#2b88d8" font-family="Open Sans">A</text><text x="0" y="28" font-size="14" fill="#444" font-family="Open Sans">Z</text><path d="M11 9h15l-6 8v9l-3-2v-7z" stroke="#444" stroke-width="1.200"/></svg></div>
        <div>Sort &amp;</div>
        <div>Filter <svg class="cv" width="7" height="5"><use href="#cv"/></svg></div>
      </div>
      <div class="xl-big bw42 ml2">
        <div class="xl-ic"><svg width="30" height="30" viewBox="0 0 30 30" fill="none" stroke="#444"><circle cx="18" cy="12" r="10.500" fill="#fbfbf8"/><path d="M10 19L1 29"/></svg></div>
        <div>Find &amp;</div>
        <div>Select <svg class="cv" width="7" height="5"><use href="#cv"/></svg></div>
      </div>
      <div class="xl-lab">Editing</div>
    </div>
    <!-- Analysis -->
    <div class="xl-grp g8 d-flex ps-1">
      <div class="xl-big bw52">
        <div class="xl-ic"><svg width="33" height="33" viewBox="0 0 33 33" fill="none"><path d="M.5.500h26v30H.5z" fill="#fff" stroke="#3e4a3e"/><path d="M1 1h25v3H1z" fill="#999"/><path d="M.5 22h26M7 22v8M14 22v8" stroke="#aaa"/><circle cx="13" cy="14" r="9" fill="#fff" stroke="#3e4a3e" stroke-width="1.500"/><path d="M10 12h3v7h-3z" fill="#999"/><path d="M13.500 9h3v10h-3z" fill="#2b88d8"/><path d="M7 15h3v4H7z" fill="#777"/><path d="M20 20l11 12" stroke="#3e4a3e" stroke-width="1.500"/></svg></div>
        <div>Analyze</div>
        <div>Data</div>
      </div>
      <div class="xl-lab">Analysis</div>
    </div>
    <svg class="xl-collapse" width="11" height="6" viewBox="0 0 11 6" fill="none" stroke="#444"><path d="M1 5.500l4.500-4.500L10 5.500"/></svg>
  </div>
</section>

<!-- FORMULA BAR -->
<section class="xl-fbar d-flex align-items-start">
  <div class="xl-name d-flex align-items-center justify-content-between"><span>E29</span><svg width="9" height="5" viewBox="0 0 9 5"><path d="M0 0h8L4 5z" fill="#777"/></svg></div>
  <div class="xl-dots"></div>
  <div class="xl-fx d-flex align-items-center">
    <svg width="11" height="11" viewBox="0 0 11 11" stroke="#bbb" stroke-width="1.500"><path d="M1 1l9 9M10 1l-9 9"/></svg>
    <svg width="13" height="11" viewBox="0 0 13 11" stroke="#bbb" fill="none" stroke-width="2"><path d="M1 6l4 4 7-9"/></svg>
    <span class="xl-fxt">fx</span>
  </div>
  <div class="xl-input"><svg width="9" height="6" viewBox="0 0 7 5"><path d="M.8 4l2.700-2.600L6.200 4" fill="none" stroke="#555" stroke-width="1.400"/></svg></div>
</section>

<!-- SHEET -->
<main class="xl-sheet d-flex">
<table class="xl-grid">
<colgroup><col class="c0"><col class="ca"><col class="cb"><col class="cc"><col class="cdd"><col class="ce"><col class="cf"><col class="cgg"><col class="ch"><col class="ci"><col class="cj"><col class="ck"><col class="cl"></colgroup>
<thead><tr>
<th><svg class="ms-auto" width="12" height="13" viewBox="0 0 12 13"><path d="M11 1v11H0z" fill="#217346"/></svg></th>
<th>A</th><th>B</th><th>C</th><th>D</th><th class="xl-hc">E</th><th>F</th><th>G</th><th>H</th><th>I</th><th>J</th><th>K</th><th></th>
</tr></thead>
<tbody>
<tr class="rh19"><th>1</th><td class="cap" colspan="12" rowspan="6">" Smart FuelStation Manager"</td></tr>
<tr class="rh19"><th>2</th></tr>
<tr class="rh19"><th>3</th></tr>
<tr class="rh19"><th>4</th></tr>
<tr class="rh19"><th>5</th></tr>
<tr class="rh19"><th>6</th></tr>
<tr class="rh38"><th>8</th><td class="cd" colspan="2">Sale Rate</td><td></td><td class="cd">#!</td><td class="cg">Fuel</td><td class="cwb">Liter/KG</td><td class="cwb">Cost</td><td></td><td class="cd" colspan="3">Total cost</td><td></td></tr>
<tr class="rh60"><th>9</th><td class="cg">Fuel</td><td class="cwb xl-multi">"July 2023 AD fuel prices (SAR/L):<br><span class="xl-olive">- Petrol: Base price + 15 halalas</span><br><span class="xl-olive">- Diesel: Base price + 5 halalas"</span></td><td></td><td class="cw">1</td><td class="cw">Gasoline 91</td><td class="cw">100</td><td class="cw">233</td><td></td><td class="cg">Fuel</td><td class="cwb">Liter/KG</td><td class="cwb">Cost</td><td></td></tr>
<tr class="rh26"><th>10</th><td class="cw">Gasoline 91</td><td class="cw">2.33</td><td></td><td class="cw">2</td><td class="cw">Gasoline 95</td><td class="cw">100</td><td class="cw">248</td><td></td><td class="cw">Gasoline 91</td><td class="cw">100</td><td class="cw">233</td><td></td></tr>
<tr class="rh25"><th>11</th><td class="cw">Gasoline 95</td><td class="cw">2.48</td><td></td><td class="cw">3</td><td class="cw">diesel</td><td class="cw">100</td><td class="cw">80</td><td></td><td class="cw">Gasoline 95</td><td class="cw">100</td><td class="cw">248</td><td></td></tr>
<tr class="rh27"><th>12</th><td class="cw">diesel</td><td class="cw">0.8</td><td></td><td class="cw">4</td><td class="cw">Kerosene</td><td class="cw">100</td><td class="cw">93</td><td></td><td class="cw">diesel</td><td class="cw">100</td><td class="cw">80</td><td></td></tr>
<tr class="rh28"><th>13</th><td class="cw">Kerosene</td><td class="cw">0.93</td><td></td><td class="cw">5</td><td class="cw">liquefied petroleum gas</td><td class="cw">100</td><td class="cw">95</td><td></td><td class="cw">Kerosene</td><td class="cw">100</td><td class="cw">93</td><td></td></tr>
<tr class="rh27"><th>14</th><td class="cw">liquefied petroleum gas</td><td class="cw">0.95</td><td></td><td class="cw">6</td><td class="cw"></td><td class="cw"></td><td class="cw"></td><td></td><td class="cw">liquefied petroleum gas</td><td class="cw">100</td><td class="cw">95</td><td></td></tr>
<tr class="rh27"><th>15</th><td colspan="3"></td><td class="cw">7</td><td class="cw"></td><td class="cw"></td><td class="cw"></td><td colspan="5"></td></tr>
<tr class="rh24"><th>16</th><td colspan="3"></td><td class="cw">8</td><td class="cw"></td><td class="cw"></td><td class="cw"></td><td colspan="5"></td></tr>
<tr class="rh27"><th>17</th><td colspan="3"></td><td class="cw">9</td><td class="cw"></td><td class="cw"></td><td class="cw"></td><td colspan="5"></td></tr>
<tr class="rh25"><th>18</th><td colspan="3"></td><td class="cw">10</td><td class="cw"></td><td class="cw"></td><td class="cw"></td><td colspan="5"></td></tr>
<tr class="rh19"><th>19</th><td colspan="3"></td><td class="cd" colspan="3" rowspan="2">Total:</td><td class="cgn" rowspan="2">749</td><td colspan="5"></td></tr>
<tr class="rh19"><th>20</th><td colspan="3"></td><td colspan="5"></td></tr>
<tr class="rh40"><th>21</th><td class="cd" colspan="2">Purchase Rate</td><td colspan="6"></td><td class="cd" colspan="3">profit</td><td></td></tr>
<tr class="rh31"><th>22</th><td class="cg">Fuel</td><td class="cwb">"July 2023 AD fuel prices (SAR/L):</td><td colspan="6"></td><td class="cg">Fuel</td><td class="cwb">Liter/KG</td><td class="cwb">Cost</td><td></td></tr>
<tr class="rh27"><th>23</th><td class="cw">Gasoline 91</td><td class="cw">2.18</td><td colspan="6"></td><td class="cw">Gasoline 91</td><td class="cw">0.15</td><td class="cw">15</td><td></td></tr>
<tr class="rh31"><th>24</th><td class="cw">Gasoline 95</td><td class="cw">2.33</td><td colspan="6"></td><td class="cw">Gasoline 95</td><td class="cw">0.15</td><td class="cw">15</td><td></td></tr>
<tr class="rh27"><th>25</th><td class="cw">diesel</td><td class="cw">0.75</td><td colspan="6"></td><td class="cw">diesel</td><td class="cw">0.05</td><td class="cw">5</td><td></td></tr>
<tr class="rh26"><th>26</th><td class="cw">Kerosene</td><td class="cw">0.93</td><td colspan="6"></td><td class="cw">Kerosene</td><td class="cw">0</td><td class="cw">0</td><td></td></tr>
<tr class="rh28"><th>27</th><td class="cw">liquefied petroleum gas</td><td class="cw">0.95</td><td colspan="6"></td><td class="cw">liquefied petroleum gas</td><td class="cw">0</td><td class="cw">0</td><td></td></tr>
<tr class="rh19"><th>28</th><td colspan="8"></td><td class="cd" colspan="2" rowspan="2">Total:</td><td class="cgn" rowspan="2">35</td><td></td></tr>
<tr class="rh19"><th class="xl-hr">29</th><td colspan="4"></td><td class="xl-cell"><span class="xl-handle"></span></td><td colspan="3"></td><td></td></tr>
<tr class="rh11"><th><div>30</div></th><td colspan="12"></td></tr>
</tbody>
</table>
<aside class="xl-vs">
  <div class="xl-up"><svg width="9" height="6" viewBox="0 0 9 6"><path d="M0 6l4.500-6L9 6z" fill="#333"/></svg></div>
  <div class="xl-th"></div>
  <div class="xl-tr"></div>
  <div class="xl-up"><svg width="9" height="6" viewBox="0 0 9 6"><path d="M0 0l4.500 6L9 0z" fill="#333"/></svg></div>
</aside>
</main>

<!-- SHEET TABS -->
<footer class="xl-bar d-flex">
  <svg class="xl-arrows" width="36" height="12" viewBox="0 0 36 12" fill="#bbb"><path d="M4 1L0 6l4 5zM32 1l4 5-4 5z"/></svg>
  <div class="tsep ts0"></div>
  <div class="xl-tab t1">"Gas Station Setup Cost"</div>
  <div class="tsep ml1"></div>
  <div class="xl-tab t2">Aramco-dividends</div>
  <div class="tsep"></div>
  <div class="xl-tab t3">Annual</div>
  <div class="xl-tab t4">"FuelStation Manager"</div>
  <div class="xl-tab t5">Sheet1</div>
  <div class="tsep"></div>
  <svg class="xl-plus" width="17" height="17" viewBox="0 0 17 17" fill="none" stroke="#777" stroke-width="1.200"><circle cx="8.500" cy="8.500" r="7.500"/><path d="M8.500 4.500v8M4.500 8.500h8"/></svg>
  <div class="xl-hdots"></div>
  <div class="xl-hs">
    <div class="ab hb1"><svg width="5" height="8" viewBox="0 0 5 8"><path d="M5 0L0 4l5 4z" fill="#333"/></svg></div>
    <div class="ht"></div>
    <div class="ab hb2"><svg width="5" height="8" viewBox="0 0 5 8"><path d="M0 0l5 4-5 4z" fill="#333"/></svg></div>
  </div>
</footer>

<!-- OVERLAYS -->
<div class="xl-wm wm1" dir="rtl" lang="ar">مستقل</div>
<div class="xl-wm wm2">mostaql.com</div>
<div class="xl-act ac1">Activate Windows</div>
<div class="xl-act ac2">Go to PC settings to activate Windows.</div>
</body>
</html>
